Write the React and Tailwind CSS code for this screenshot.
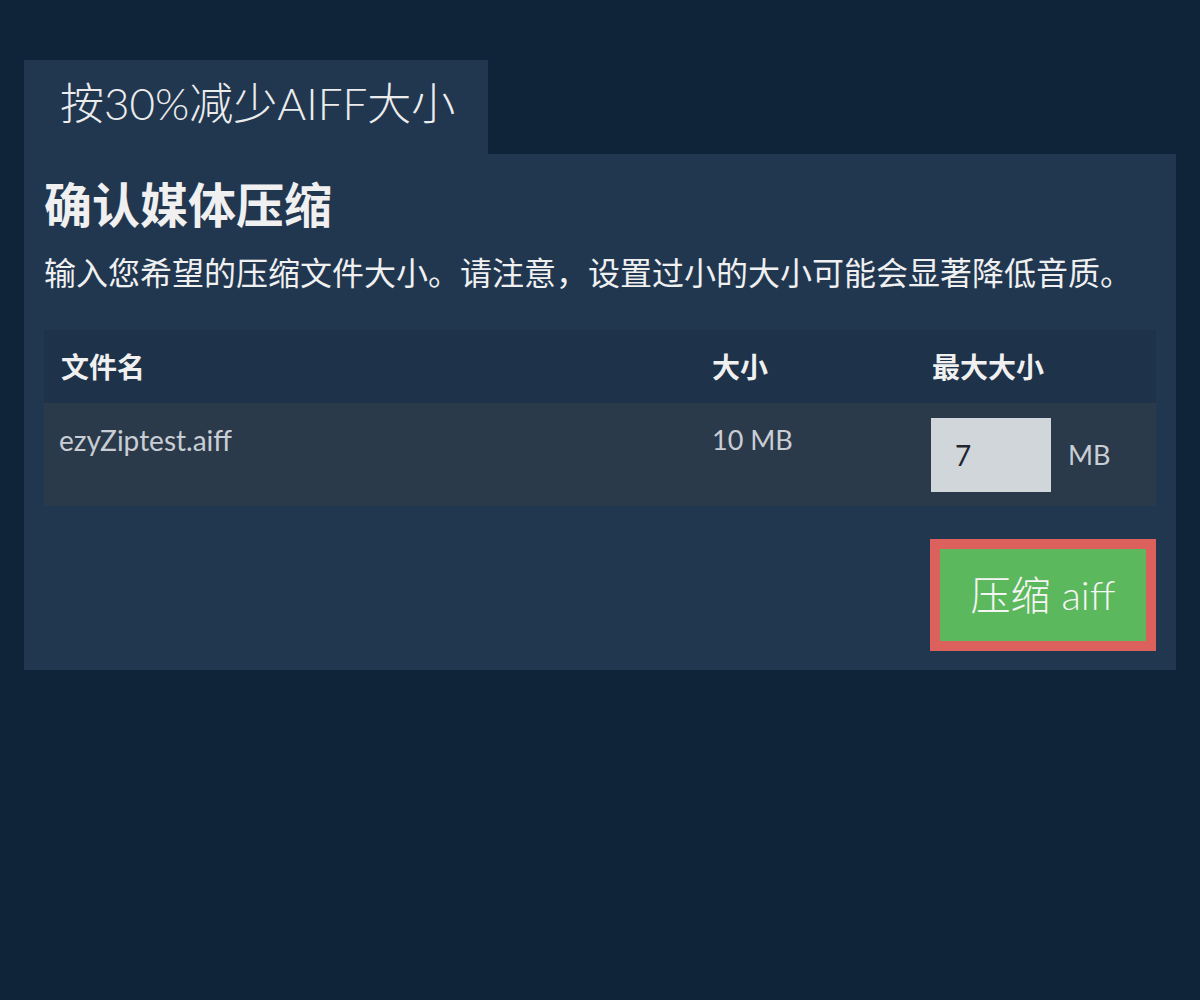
export default function App() {
  const font = { fontFamily: 'Lato, "Noto Sans CJK SC", sans-serif' };
  return (
    <div className="min-h-[1000px] w-full bg-[#0f2339] pt-[60px] px-6" style={font}>
      <div className="flex">
        <div className="h-[94px] w-[464px] bg-[#213750] flex items-center pl-9">
          <h1 className="text-[44px] font-light text-[#ececec] leading-none -mt-2">按30%减少AIFF大小</h1>
        </div>
      </div>
      <div className="bg-[#213750] px-5 pt-[23px] pb-[19px]">
        <h2 className="text-[48px] font-bold text-[#f0f0f0] leading-[56px]">确认媒体压缩</h2>
        <p className="text-[32px] text-[#f0f0f0] mt-[20px] leading-[40px] whitespace-nowrap">输入您希望的压缩文件大小。请注意，设置过小的大小可能会显著降低音质。</p>
        <table className="w-full mt-[37px] border-collapse">
          <thead>
            <tr className="bg-[#1e3249] h-[73px]">
              <th className="text-left text-[28px] font-bold text-[#f0f0f0] pl-[17px] w-[651px]">文件名</th>
              <th className="text-left text-[28px] font-bold text-[#f0f0f0] pl-[17px] w-[220px]">大小</th>
              <th className="text-left text-[28px] font-bold text-[#f0f0f0] pl-[17px]">最大大小</th>
            </tr>
          </thead>
          <tbody>
            <tr className="bg-[#2b3a4b] h-[103px]">
              <td className="align-top pl-[15px] pt-[16px] text-[28px] leading-[42px] text-[#c9ced4]">ezyZiptest.aiff</td>
              <td className="align-top pl-[17px] pt-[16px] text-[27px] leading-[42px] text-[#c9ced4]">10 MB</td>
              <td className="align-top pl-[16px] pt-[15px]">
                <div className="flex items-center">
                  <input
                    defaultValue="7"
                    className="w-[120px] h-[74px] bg-[#d1d6db] text-[#1f2630] text-[28px] pl-[24px] outline-none"
                    style={font}
                  />
                  <span className="ml-[17px] text-[27px] text-[#c9ced4]">MB</span>
                </div>
              </td>
            </tr>
          </tbody>
        </table>
        <div className="flex justify-end mt-[33px]">
          <button className="w-[226px] h-[112px] border-[10px] border-[#dc605c] bg-[#5cb85c] text-[#f5f5f5] text-[40px] font-light">
            压缩 aiff
          </button>
        </div>
      </div>
    </div>
  );
}
